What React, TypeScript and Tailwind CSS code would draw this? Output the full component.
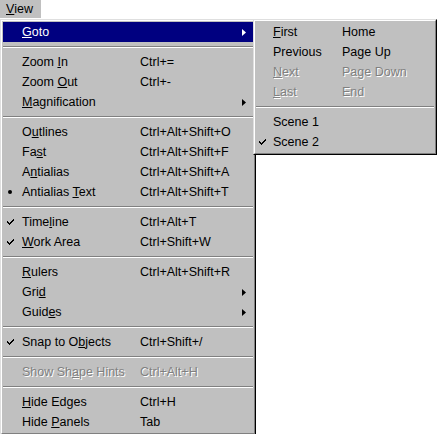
import type { ReactNode } from 'react'

type Entry =
  | 'sep'
  | {
      label: string
      shortcut?: string
      arrow?: boolean
      check?: boolean
      bullet?: boolean
      disabled?: boolean
      active?: boolean
    }

const viewMenu: Entry[] = [
  { label: '&Goto', arrow: true, active: true },
  'sep',
  { label: 'Zoom &In', shortcut: 'Ctrl+=' },
  { label: 'Zoom &Out', shortcut: 'Ctrl+-' },
  { label: '&Magnification', arrow: true },
  'sep',
  { label: 'O&utlines', shortcut: 'Ctrl+Alt+Shift+O' },
  { label: 'Fa&st', shortcut: 'Ctrl+Alt+Shift+F' },
  { label: 'A&ntialias', shortcut: 'Ctrl+Alt+Shift+A' },
  { label: 'Antialias &Text', shortcut: 'Ctrl+Alt+Shift+T', bullet: true },
  'sep',
  { label: 'Time&line', shortcut: 'Ctrl+Alt+T', check: true },
  { label: '&Work Area', shortcut: 'Ctrl+Shift+W', check: true },
  'sep',
  { label: '&Rulers', shortcut: 'Ctrl+Alt+Shift+R' },
  { label: 'Gri&d', arrow: true },
  { label: 'Guid&es', arrow: true },
  'sep',
  { label: 'Snap to O&bjects', shortcut: 'Ctrl+Shift+/', check: true },
  'sep',
  { label: 'Show Sh&ape Hints', shortcut: 'Ctrl+Alt+H', disabled: true },
  'sep',
  { label: '&Hide Edges', shortcut: 'Ctrl+H' },
  { label: 'Hide &Panels', shortcut: 'Tab' },
]

const gotoMenu: Entry[] = [
  { label: '&First', shortcut: 'Home' },
  { label: 'Previous', shortcut: 'Page Up' },
  { label: '&Next', shortcut: 'Page Down', disabled: true },
  { label: '&Last', shortcut: 'End', disabled: true },
  'sep',
  { label: 'Scene 1' },
  { label: 'Scene 2', check: true },
]

// "&" marks the mnemonic letter
function Mnemonic({ text }: { text: string }) {
  const i = text.indexOf('&')
  if (i < 0) return <>{text}</>
  return (
    <>
      {text.slice(0, i)}
      <u className="underline-offset-[1px]">{text[i + 1]}</u>
      {text.slice(i + 2)}
    </>
  )
}

function Check() {
  return (
    <svg width="7" height="7" viewBox="0 0 7 7" className="block">
      <path d="M0 2h1v1h1v1h1V3h1V2h1V1h1V0h1v2H6v1H5v1H4v1H3v1H2V5H1V4H0z" fill="currentColor" />
    </svg>
  )
}

function Arrow() {
  return (
    <svg width="4" height="7" viewBox="0 0 4 7" className="block">
      <polygon points="0,0 4,3.5 0,7" fill="currentColor" />
    </svg>
  )
}

function Separator() {
  return (
    <div className="h-[10px] flex items-center">
      <div className="w-full border-t border-b border-t-[#808080] border-b-white" />
    </div>
  )
}

function Panel({ children, className }: { children: ReactNode; className?: string }) {
  return (
    <div
      className={`border border-t-[#dfdfdf] border-l-[#dfdfdf] border-r-black border-b-black bg-[#c0c0c0] ${className ?? ''}`}
    >
      <div className="border border-t-white border-l-white border-r-[#808080] border-b-[#808080] p-[1px]">
        {children}
      </div>
    </div>
  )
}

function Menu({
  entries,
  gutter,
  labelWidth,
  markPad,
}: {
  entries: Entry[]
  gutter: string
  labelWidth: string
  markPad: string
}) {
  return (
    <>
      {entries.map((e, idx) => {
        if (e === 'sep') return <Separator key={idx} />
        const tone = e.active
          ? 'bg-[#000080] text-white'
          : e.disabled
            ? 'text-[#808080] [text-shadow:1px_1px_0_#ffffff]'
            : 'text-black'
        return (
          <div key={idx} className={`flex items-center h-[20px] whitespace-nowrap ${tone}`}>
            <div className={`${gutter} ${markPad} flex items-center shrink-0`}>
              {e.check && <Check />}
              {e.bullet && <div className="ml-[1px] w-[4px] h-[4px] rounded-full bg-black" />}
            </div>
            <div className={`${labelWidth} shrink-0`}>
              <Mnemonic text={e.label} />
            </div>
            <div className="flex-1">{e.shortcut}</div>
            {e.arrow && (
              <div className="pr-[7px]">
                <Arrow />
              </div>
            )}
          </div>
        )
      })}
    </>
  )
}

export default function App() {
  return (
    <div className="relative w-[439px] h-[434px] overflow-hidden bg-white text-[12.5px] leading-none font-['Liberation_Sans',Arial,sans-serif]">
      {/* Menu bar */}
      <div className="h-[18px] w-[41px] bg-[#c0c0c0] pl-[6px] flex items-center text-black">
        <Mnemonic text="&View" />
      </div>

      {/* View menu */}
      <Panel className="mt-[1px] w-[256px]">
        <Menu entries={viewMenu} gutter="w-[19px]" labelWidth="w-[118px]" markPad="pl-[4px]" />
      </Panel>

      {/* Goto submenu */}
      <Panel className="absolute left-[253px] top-[19px] w-[184px]">
        <Menu entries={gotoMenu} gutter="w-[17px]" labelWidth="w-[69px]" markPad="pl-[3px]" />
      </Panel>
    </div>
  )
}
